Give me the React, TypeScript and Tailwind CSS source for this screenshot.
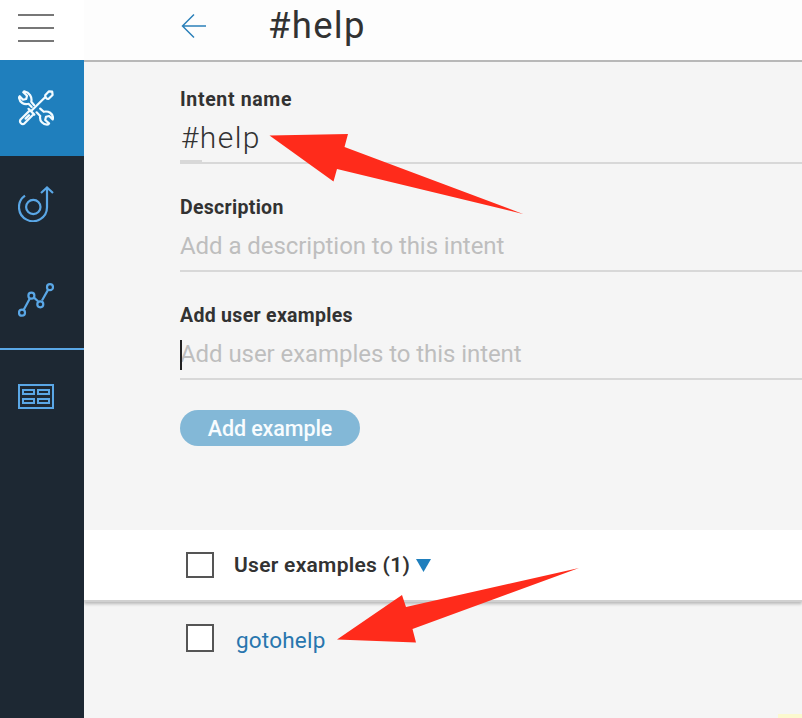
import React from "react";

function ToolsIcon() {
  return (
    <svg width="36" height="36" viewBox="0 0 36 36" fill="none" stroke="#f2fbff" strokeWidth="2.2" strokeLinejoin="round" strokeLinecap="round">
      <path d="M16.2 15.2 L13.3 11.8 C14.3 7 11.5 2.5 6.2 1.3 L5.3 2.2 L9 5.8 L8.2 9 L5 9.7 L1.7 6.2 L1 7.4 C1.5 12.5 6 15 10.5 13.8 L13.7 17" />
      <path d="M18.6 22.3 L22.2 26 C21.2 31 25 35 30 34.5 L31 33.4 L27.2 30 L28 26.7 L31.2 26 L34.7 29.4 L35 28.2 C35 23.4 30.5 20.6 25.7 21.8 L22.2 18.6" />
      <path d="M13.2 21 L27.6 6.8 M27.2 5.3 L31 1.3 L34.2 1.7 L34.6 5 L30.7 8.8 C29 9.5 26.7 7.2 27.2 5.3 Z" />
      <path d="M10.5 18.8 L16.3 24.6 M11.6 20.6 L2.6 29.5 C0.8 32 4 35.5 6.6 33.3 L15 24.8 M7.6 28.6 L11 25.2" />
    </svg>
  );
}

function DialogIcon() {
  return (
    <svg width="36" height="36" viewBox="0 0 36 36" fill="none" stroke="#5aa7e6" strokeWidth="2.2">
      <path d="M7 9.7 A14 14 0 1 0 29 21 V1.8 M23 7 L29 1.5 L35 7" />
      <circle cx="15.3" cy="21" r="7.2" />
    </svg>
  );
}

function AnalyticsIcon() {
  return (
    <svg width="36" height="36" viewBox="0 0 36 36" fill="none" stroke="#5aa7e6" strokeWidth="2.2">
      <path d="M5.6 28 L11.8 16.4 M15.7 15.4 L20 19.2 M24 18.5 L30.3 7.4" />
      <circle cx="4" cy="30.7" r="3" />
      <circle cx="13.4" cy="13.7" r="3" />
      <circle cx="22.3" cy="22.3" r="3" />
      <circle cx="32" cy="5.2" r="3" />
    </svg>
  );
}

function CatalogIcon() {
  return (
    <svg width="36" height="26" viewBox="0 0 36 26" fill="none" stroke="#5aa7e6" strokeWidth="2">
      <path d="M1 1 H35 V24 H1 Z M5 6 H16 V10 H5 Z M20 6 H31 V10 H20 Z M5 15 H16 V19 H5 Z M20 15 H31 V19 H20 Z" />
    </svg>
  );
}

function Field({ label, tracking = "tracking-[0.3px]", children }: { label: string; tracking?: string; children: React.ReactNode }) {
  return (
    <section className="mb-7 h-20">
      <div className={`h-[30px] pt-[2px] text-[19.5px] leading-7 font-bold ${tracking}`}>{label}</div>
      <div className="relative flex h-[50px] items-center border-b-2 border-[#d8d8d8]">{children}</div>
    </section>
  );
}

function Checkbox({ className }: { className: string }) {
  return <span className={`block w-7 shrink-0 border-2 border-[#555] bg-white ${className}`} />;
}

export default function App() {
  return (
    <div className="relative flex h-[718px] w-[802px] overflow-hidden bg-[#f5f5f5] font-[Roboto,sans-serif] text-[#323232]">
      <nav className="z-10 flex w-[84px] shrink-0 flex-col bg-[#1d2833]">
        <div className="flex h-[60px] flex-col gap-[11px] bg-white pt-[14px] pl-[18px]">
          <span className="h-[2px] w-9 bg-[#777]" />
          <span className="h-[2px] w-9 bg-[#777]" />
          <span className="h-[2px] w-9 bg-[#777]" />
        </div>
        <div className="flex h-24 items-center bg-[#1f7fbd] pl-[18px]"><ToolsIcon /></div>
        <div className="flex h-24 items-center pl-[18px]"><DialogIcon /></div>
        <div className="flex h-24 items-center pl-[18px]"><AnalyticsIcon /></div>
        <div className="flex h-24 items-center border-t-2 border-[#5aa7e6] pl-[18px]"><CatalogIcon /></div>
      </nav>

      <main className="flex min-w-0 flex-1 flex-col">
        <header className="flex h-[62px] shrink-0 items-center border-b-2 border-[#b8b8b8] bg-[#fdfdfd] pb-2 pl-[97px]">
          <svg width="26" height="26" viewBox="0 0 26 26" fill="none" stroke="#2b80b9" strokeWidth="1.5">
            <path d="M25 13 H2 M13 1.5 L1.5 13 L13 24.5" />
          </svg>
          <h1 className="ml-[61px] text-[36.5px] leading-[52px] tracking-[1.3px]">#help</h1>
        </header>

        <div className="h-[468px] shrink-0 pt-[22px] pl-24">
          <Field label="Intent name" tracking="tracking-[0.65px]">
            <span className="ml-px pb-px text-[30px] font-light tracking-[1.4px]">#help</span>
            <span className="absolute bottom-0 left-0 h-[2px] w-[22px] bg-[#d8d8d8]" />
          </Field>
          <Field label="Description">
            <span className="text-[24px] tracking-[-0.06px] text-[#bebebe]">Add a description to this intent</span>
          </Field>
          <Field label="Add user examples">
            <span className="absolute bottom-[8px] left-0 h-[30px] w-[2px] bg-[#222]" />
            <span className="text-[24px] tracking-[-0.06px] text-[#bebebe]">Add user examples to this intent</span>
          </Field>
          <button className="mt-[30px] flex h-9 w-[180px] items-center justify-center rounded-full bg-[#83b8d7] pt-[3px] text-[21.5px] font-medium tracking-[-0.1px] text-[#f8fcfe]">Add example</button>
        </div>

        <div className="flex h-[70px] shrink-0 items-center bg-white pl-[102px] shadow-[0_2px_0_#d0d0d0,0_4px_3px_#b8b8b8]">
          <Checkbox className="h-[26px]" />
          <span className="ml-5 pt-px text-[21px] font-semibold tracking-[0.28px]">User examples (1)</span>
          <svg className="ml-[6px] mt-px" width="15" height="13" viewBox="0 0 15 13"><path d="M0 0 H15 L7.5 13 Z" fill="#1f7fbd" /></svg>
        </div>
        <div className="flex h-[76px] shrink-0 items-center pl-[102px]">
          <Checkbox className="h-[28px]" />
          <span className="ml-[22px] pt-[5px] text-[22.5px] tracking-[0.2px] text-[#2876ae]">gotohelp</span>
        </div>
      </main>

      <svg className="pointer-events-none absolute inset-0" width="802" height="718" viewBox="0 0 802 718" fill="#ff2b1b">
        <path d="M269.5 135.5 L348 134 L344.5 147 L523 214 L337 169 L333.5 181.5 Z" />
        <path d="M337 639.5 L402 595 L406 607 L579 568 L412.5 629 L416 642.5 Z" />
      </svg>
      <span className="absolute right-0 bottom-0 h-1 w-6 bg-[#fbf9cf]" />
    </div>
  );
}
